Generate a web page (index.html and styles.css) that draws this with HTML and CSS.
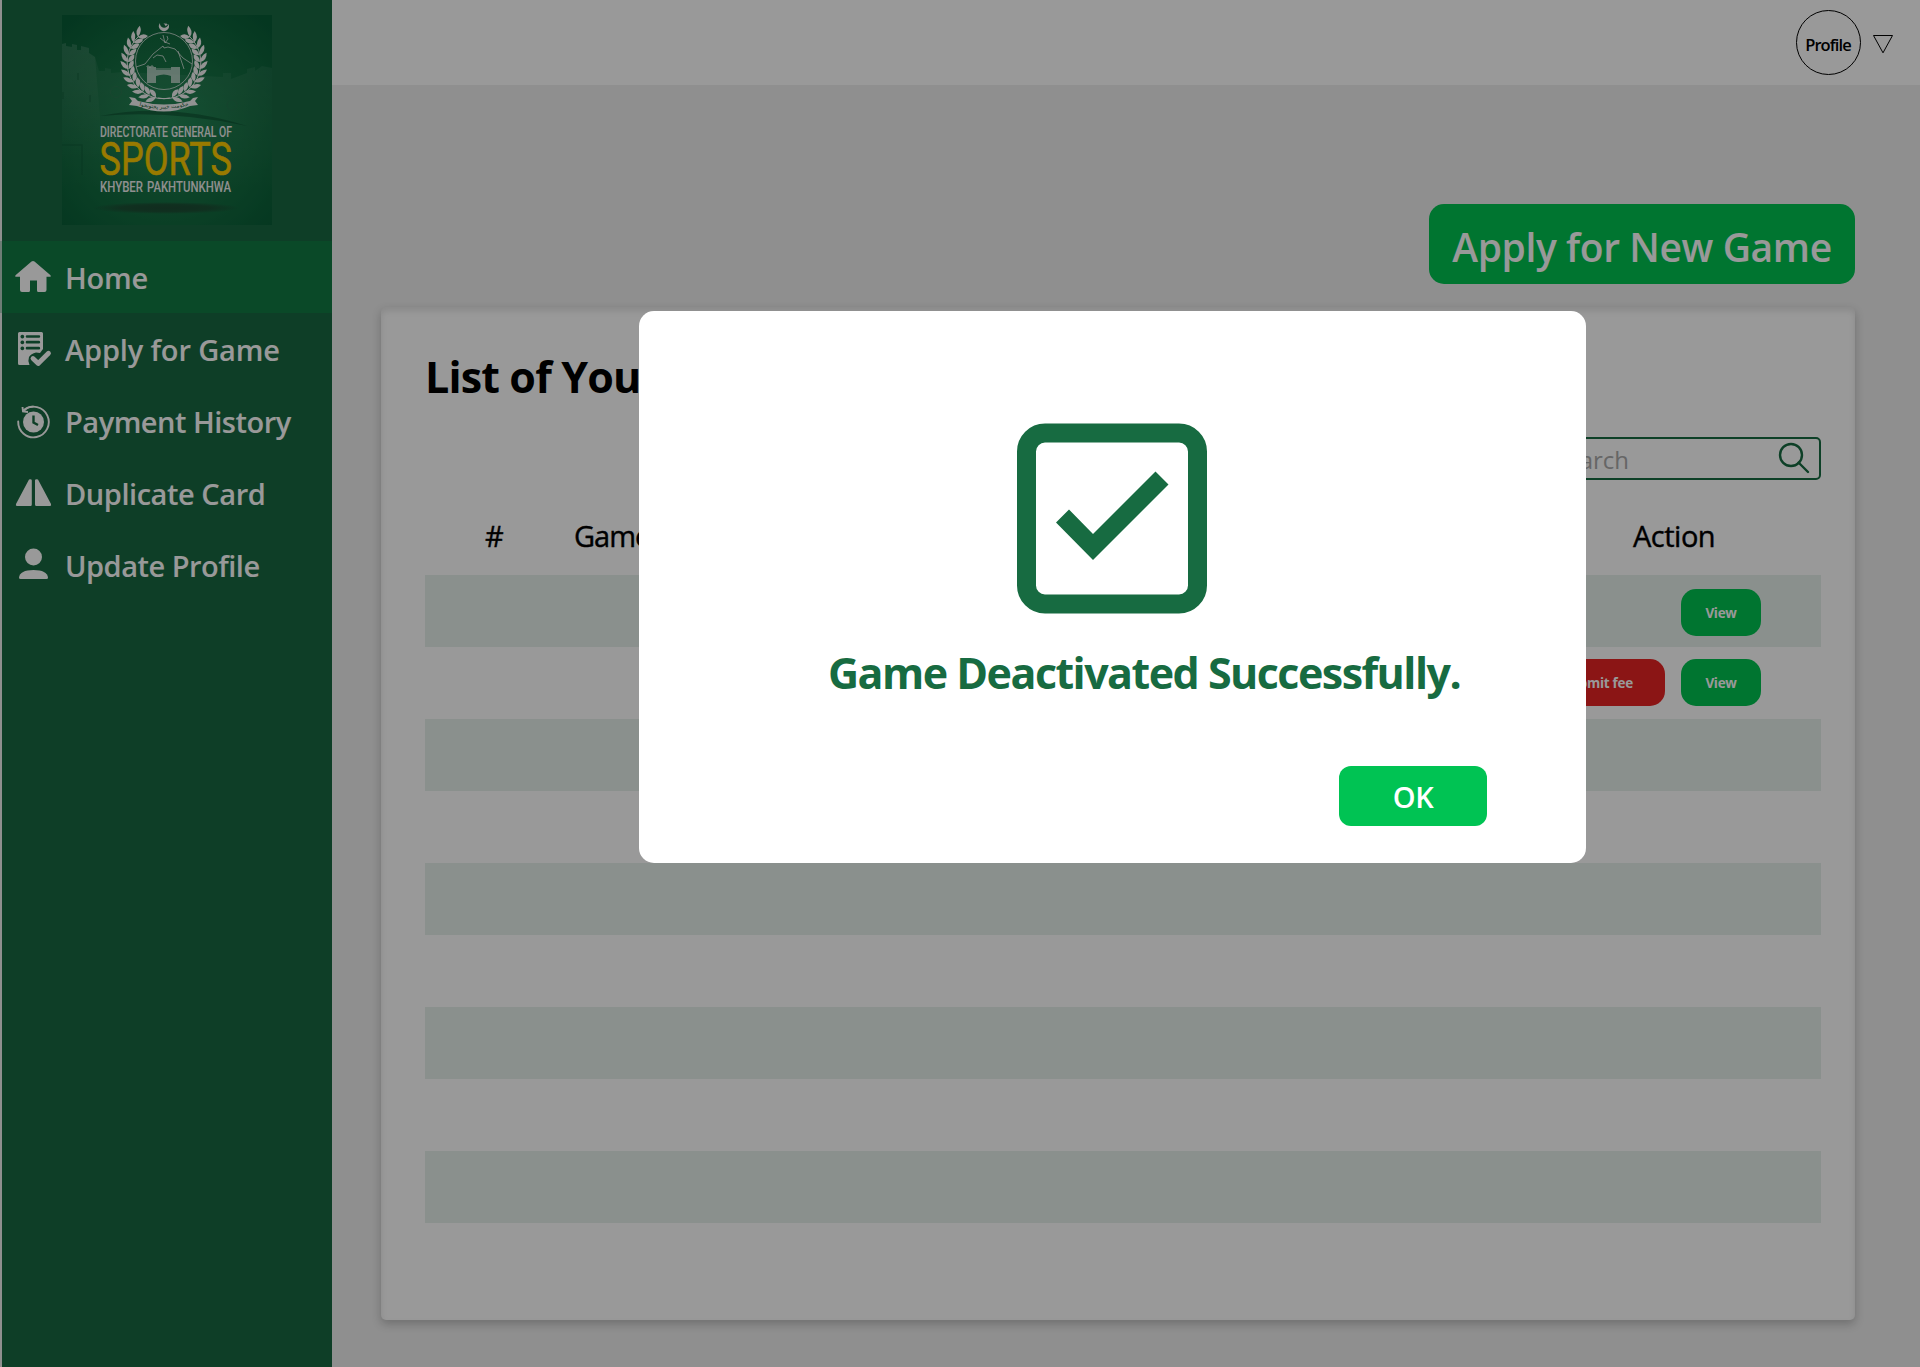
FILE: index.html
```html
<!DOCTYPE html>
<html lang="en">
<head>
<meta charset="utf-8">
<title>Directorate General of Sports</title>
<link rel="stylesheet" href="styles.css">
</head>
<body>
<div class="app">
  <aside class="sidebar">
    <svg class="logo" viewBox="62 15 210 210">
      <defs>
        <radialGradient id="field" cx="50%" cy="55%" r="70%">
          <stop offset="0" stop-color="#1c8451"/>
          <stop offset="0.55" stop-color="#146d41"/>
          <stop offset="1" stop-color="#085c36"/>
        </radialGradient>
        <linearGradient id="wall" x1="0" y1="0" x2="0" y2="1">
          <stop offset="0" stop-color="#fff" stop-opacity="0.07"/>
          <stop offset="1" stop-color="#fff" stop-opacity="0"/>
        </linearGradient>
        <radialGradient id="shade"><stop offset="0" stop-color="#1d4a33"/><stop offset="0.6" stop-color="#1d4a33" stop-opacity="0.8"/><stop offset="1" stop-color="#1d4a33" stop-opacity="0"/></radialGradient>
        <g id="leaf">
          <path d="M128 64q-7-1-7-9q6 2 7 9z"/>
          <path d="M128 64q0-7 6-8q1 7-6 8z"/>
        </g>
        <g id="branch">
          <use href="#leaf" transform="rotate(47 164 62)"/>
          <use href="#leaf" transform="rotate(36 164 62)"/>
          <use href="#leaf" transform="rotate(25 164 62)"/>
          <use href="#leaf" transform="rotate(14 164 62)"/>
          <use href="#leaf" transform="rotate(3 164 62)"/>
          <use href="#leaf" transform="rotate(-8 164 62)"/>
          <use href="#leaf" transform="rotate(-19 164 62)"/>
          <use href="#leaf" transform="rotate(-30 164 62)"/>
          <use href="#leaf" transform="rotate(-41 164 62)"/>
          <use href="#leaf" transform="rotate(-52 164 62)"/>
          <use href="#leaf" transform="rotate(-63 164 62)"/>
          <use href="#leaf" transform="rotate(-74 164 62)"/>
          <path d="M139 36A36 36 0 0 0 170 98" fill="none" stroke="#f4f4f4" stroke-width="1"/>
        </g>
        <path id="ribbon" d="M138 105.500Q164 112 190 105"/>
      </defs>
      <rect x="62" y="15" width="210" height="210" fill="url(#field)"/>
      <path d="M62 44l4-1v3l6 1v-3l5 1v5h4v-4l8 2v5l6 4 4 14h6v-3l6 1v4l12-1 100 5v-4h8v6l16-6v-4l8-2v4l7-5 10 2V190H62z" fill="url(#wall)"/>
      <path d="M62 44l4-1v3l6 1v-3l5 1v5h4v-4l8 2v5l6 4 5 60V160H62z" fill="url(#wall)"/>
      <path d="M100 116Q170 102 247 126Q170 110 100 116z" fill="#0c4d2e" opacity=".6"/>
      <path d="M62 145h20v30M78 73v7M63 92v7M90 95v7" fill="none" stroke="#0c5532" stroke-width="1.500" opacity=".4"/>
      <circle cx="116" cy="92" r="5.500" fill="none" stroke="#2a7650"/>
      <circle cx="232" cy="105" r="5" fill="none" stroke="#24724b"/>
      <ellipse cx="166" cy="208" rx="74" ry="6" fill="url(#shade)"/>
      <g fill="#f4f4f4">
        <use href="#branch"/>
        <use href="#branch" transform="translate(328 0) scale(-1 1)"/>
        <path d="M160 23a5 5 0 1 0 8.500 1a3.800 3.800 0 1 1-8.500-1zM163.500 23l2 1 .5-1.500.5 1.500 1.500.5-1.500.8-.5 1.200z"/>
        <path d="M129 97l6 1 3 3q26 7 52 0l3-3 5-1-3 4 3 4-8 1q-26 11-53 0l-8-1 3-4z"/>
        <path d="M147 67h9v16h-9zM171 67h9v16h-9zM156 70h15v6q-7-3-15 0z" opacity=".65"/>
      </g>
      <g fill="none" stroke="#f4f4f4" stroke-width=".7">
        <circle cx="164" cy="61" r="28.500"/>
        <path d="M136 67l9-3 8-10 10-8 1 2 4-1 7 2 8 9 9 6M153 58l4-3 6 1 3 6M178 51l6 18M160 38l5 4 5 2M163 35l2 8 3-4-1-3M147 67v-1h2v1h2v-1h2v1M156 69h15"/>
      </g>
      <text class="logo-motto" text-anchor="middle"><textPath href="#ribbon" startOffset="50%">حکومت خیبر پختونخوا</textPath></text>
      <text class="logo-line" x="100" y="137" textLength="68" lengthAdjust="spacingAndGlyphs">DIRECTORATE</text>
      <text class="logo-line" x="171" y="137" textLength="61" lengthAdjust="spacingAndGlyphs">GENERAL OF</text>
      <text class="logo-name" x="99.500" y="175" textLength="132.500" lengthAdjust="spacingAndGlyphs">SPORTS</text>
      <text class="logo-line" x="100" y="191.700" textLength="43" lengthAdjust="spacingAndGlyphs">KHYBER</text>
      <text class="logo-line" x="147" y="191.700" textLength="84" lengthAdjust="spacingAndGlyphs">PAKHTUNKHWA</text>
    </svg>
    <nav class="nav">
      <a class="nav-item active">
        <svg class="nav-icon" viewBox="0 0 40 40"><path d="M18.500 4.500Q20 3.300 21.500 4.500L37.500 18.300Q38.500 19.800 37 19.800H33.500V33Q33.500 35 31.500 35H25.500Q24 35 24 33.500V23.500H17V33.500Q17 35 15.500 35H9Q7 35 7 33V19.800H3Q1.500 19.800 2.500 18.300z"/></svg>
        <span class="nav-text t-home">Home</span></a>
      <a class="nav-item">
        <svg class="nav-icon" viewBox="0 0 40 40"><path fill-rule="evenodd" d="M6.500 3H28.500Q30 3 30 4.500V20L27 24 23 23.500Q18 24.500 16 28Q14.500 32 16.500 36H6.500Q5 36 5 34.500V4.500Q5 3 6.500 3zM14 6.200Q12.700 6.200 12.700 7.500T14 8.800H26Q27.200 8.800 27.200 7.500T26 6.200zM14 11.800Q12.700 11.800 12.700 13.200T14 14.500H26Q27.200 14.500 27.200 13.200T26 11.800zM14 17.800Q12.700 17.800 12.700 19.200T14 20.500H26Q27.200 20.500 27.200 19.200T26 17.800zM9.300 5.700a1.900 1.900 0 1 0 .1 0zM9.300 11.500a1.900 1.900 0 1 0 .1 0zM9.300 17.500a1.900 1.900 0 1 0 .1 0z"/><path d="M20 29.500l5.200 5L35.500 24.200" fill="none" stroke="currentColor" stroke-width="4.800" stroke-linecap="round" stroke-linejoin="round"/></svg>
        <span class="nav-text t-apply">Apply for Game</span></a>
      <a class="nav-item">
        <svg class="nav-icon" viewBox="0 0 40 40"><circle cx="20.500" cy="21" r="10.500"/><path d="M20.500 14.500V21.500L25 24" fill="none" class="cut"/><path d="M5.200 20.500A15.300 15.300 0 1 0 11 9" fill="none" stroke="currentColor" stroke-width="1.900" stroke-linecap="round"/><path d="M9.500 6L10 10.500 15 11M11 9.500Q15 5.300 20.500 5.700" fill="none" stroke="currentColor" stroke-width="1.900"/></svg>
        <span class="nav-text t-pay">Payment History</span></a>
      <a class="nav-item">
        <svg class="nav-icon" viewBox="0 0 40 40"><path d="M16 6.500Q18.800 5.800 18.800 7.500V31.500Q18.800 33 17.500 33H4Q2.300 33 3 31zM25 6.500Q22 5.800 22 7.500V31.500Q22 33 23.500 33H37Q38.700 33 38 31z"/></svg>
        <span class="nav-text t-dup">Duplicate Card</span></a>
      <a class="nav-item">
        <svg class="nav-icon" viewBox="0 0 40 40"><circle cx="20.500" cy="12" r="8.500"/><path d="M6 32.500Q7 25 20.500 25T35 32.500Q35 34 33.500 34H7.500Q6 34 6 32.500z"/></svg>
        <span class="nav-text t-upd">Update Profile</span></a>
    </nav>
  </aside>
  <div class="page">
    <header class="topbar">
      <div class="avatar">Profile</div>
      <svg class="caret" viewBox="0 0 22 20"><path d="M1.500 1.500H20.500L11 18.800z" fill="none" stroke="#000"/></svg>
    </header>
    <main class="content">
      <button class="apply">Apply for New Game</button>
      <section class="card">
        <h1 class="card-title">List of Your Games</h1>
        <div class="search"><span class="search-hint">Search</span>
          <svg class="search-icon" viewBox="0 0 32 32"><circle cx="13" cy="13" r="11"/><path d="M20.500 20.500L30 30"/></svg>
        </div>
        <div class="table">
          <div class="thead"><span class="col-no">#</span><span class="col-game">Game</span><span class="col-action">Action</span></div>
          <div class="row"><button class="btn view">View</button></div>
          <div class="row second"><button class="btn fee">Submit fee</button><button class="btn view">View</button></div>
          <div class="row"></div>
          <div class="row"></div>
          <div class="row"></div>
          <div class="row"></div>
          <div class="row"></div>
          <div class="row"></div>
          <div class="row"></div>
        </div>
      </section>
    </main>
  </div>
</div>
<div class="overlay">
  <div class="modal">
    <svg class="modal-icon" viewBox="0 0 190 190"><rect x="9.500" y="9.500" width="171" height="171" rx="18.500" fill="none" stroke="#176b41" stroke-width="19"/><path d="M39 99L52 86 76 110.500 138.500 48 151.500 61 76 136.500z" fill="#176b41"/></svg>
    <p class="modal-text">Game Deactivated Successfully.</p>
    <button class="ok">OK</button>
  </div>
</div>
</body>
</html>
```
FILE: styles.css
```css
* { box-sizing: border-box; }
body { margin: 0; background: #eee; font-family: "Open Sans", "Noto Sans", sans-serif; color: #000; }
button { border: 0; padding: 0; font-family: inherit; color: #fff; display: flex; align-items: center; justify-content: center; white-space: nowrap; }
.app { display: flex; height: 1367px; padding-left: 2px; overflow: hidden; }

.sidebar { width: 330px; flex: none; background: #186841; color: #fff; }
.logo { display: block; width: 210px; height: 210px; margin: 15px 0 16px 60px; }
.logo-line { font: 500 14.5px Roboto, sans-serif; fill: #f0f0f0; }
.logo-name { font: 400 47px Roboto, sans-serif; fill: #ffcc00; stroke: #ffcc00; stroke-width: .6; }
.logo-motto { font: 5.5px "DejaVu Sans", sans-serif; fill: #14603a; }
.nav-item { display: flex; align-items: center; height: 72px; padding-left: 11px; }
.nav-item.active { background: #117b44; box-shadow: -2px 0 0 rgba(17, 123, 68, .25); }
.nav-icon { width: 40px; height: 40px; margin: 0 12px 0 0; fill: currentColor; flex: none; }
.cut { stroke: #186841; stroke-width: 2.4; }
.nav-text { font-size: 29px; font-weight: 600; line-height: 40px; white-space: nowrap; padding-top: 2px; }
.t-home { letter-spacing: -.2px; }
.t-apply { letter-spacing: -.15px; }
.t-pay, .t-upd { letter-spacing: -.5px; }
.t-dup { letter-spacing: -.45px; }

.page { flex: 1; min-width: 0; }
.topbar { height: 85px; background: #fff; display: flex; justify-content: flex-end; padding: 10px 26px 0 0; }
.avatar { width: 65px; height: 65px; border: 1px solid #000; border-radius: 50%; font-size: 16.5px; font-weight: 600; letter-spacing: -.9px; line-height: 67px; text-align: center; padding-right: 1px; white-space: nowrap; }
.caret { width: 22px; height: 20px; margin: 24px 0 0 11px; }

.content { display: flex; flex-direction: column; padding: 119px 65px 0 49px; }
.apply { align-self: flex-end; width: 426px; height: 80px; border-radius: 15px; background: #00c350; font-size: 39px; font-weight: 600; letter-spacing: -.4px; padding-top: 5px; }
.card { margin-top: 23px; height: 1013px; padding: 0 34px 0 44px; border-radius: 5px; background: #fff; box-shadow: 0 4px 10px rgba(0, 0, 0, .22), inset 0 4px 6px rgba(0, 0, 0, .1); display: flex; flex-direction: column; }
.card-title { margin: 40px 0 0; font-size: 43px; line-height: 60px; font-weight: 700; letter-spacing: -.85px; }
.search { align-self: flex-end; width: 340px; height: 43px; margin-top: 30px; border: 2px solid #176b41; border-radius: 5px; display: flex; align-items: center; justify-content: space-between; padding: 0 9px 0 70px; }
.search-hint { font-size: 24px; color: #aaa; padding-top: 2px; }
.search-icon { width: 32px; height: 32px; fill: none; stroke: #176b41; stroke-width: 2.4; stroke-linecap: round; margin-top: -2px; }
.table { margin-top: 20px; }
.thead { display: grid; grid-template-columns: 149px 1059px 1fr; height: 75px; line-height: 71px; font-size: 29px; letter-spacing: -.5px; -webkit-text-stroke: .4px #000; }
.col-no { padding-left: 60px; }
.col-game { letter-spacing: -1px; }
.row { display: flex; justify-content: flex-end; gap: 16px; height: 72px; padding: 14px 60px 0 0; }
.row:nth-child(even) { background: #e6f0eb; }
.row.second { padding-top: 12px; }
.btn { height: 47px; border-radius: 15px; font-size: 13.5px; font-weight: 700; letter-spacing: -.3px; }
.view { width: 80px; background: #00c350; }
.fee { width: 134px; background: #e82323; padding-top: 1px; }

.overlay { position: absolute; inset: 0; height: 1367px; background: rgba(0, 0, 0, .4); padding: 311px 0 0 639px; }
.modal { width: 947px; height: 552px; border-radius: 15px; background: #fff; display: flex; flex-direction: column; padding-top: 112px; }
.modal-icon { width: 190px; height: 191px; margin-left: 378px; flex: none; }
.modal-text { margin: 29px 0 0 189px; font-size: 43px; line-height: 60px; font-weight: 700; color: #176b41; white-space: nowrap; letter-spacing: -1.53px; }
.ok { width: 148px; height: 60px; margin: 63px 0 0 700px; border-radius: 12px; background: #00c353; font-size: 29px; font-weight: 600; letter-spacing: -.3px; padding-top: 1px; }
```
